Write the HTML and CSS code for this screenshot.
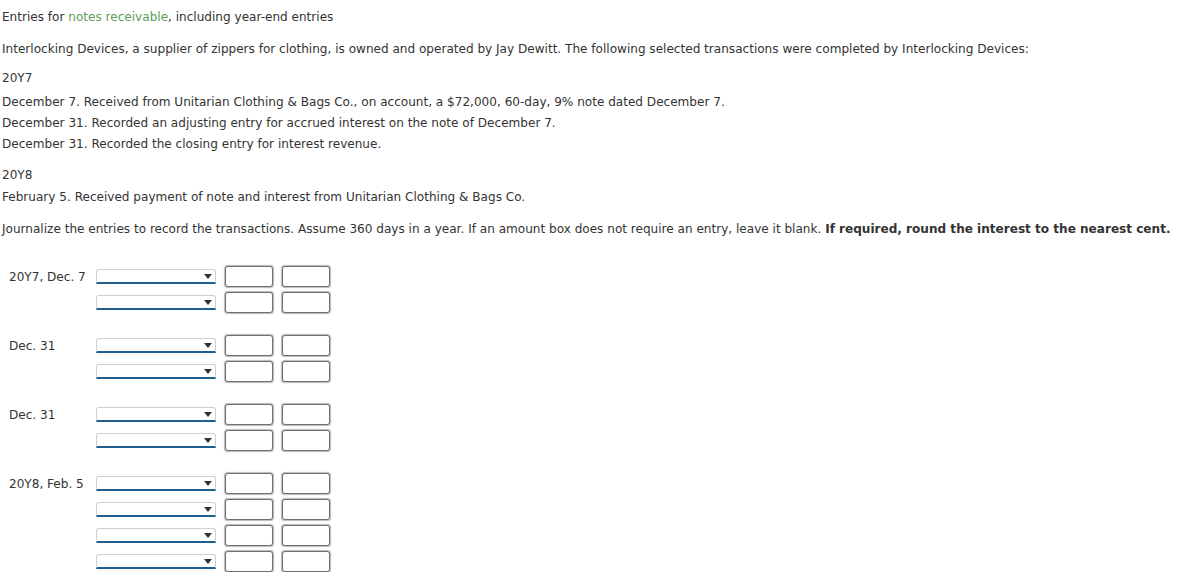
FILE: index.html
```html
<!DOCTYPE html>
<html>
<head>
<meta charset="utf-8">
<link rel="stylesheet" href="styles.css">
</head>
<body>
<div class="page">
  <p class="title">Entries for <span class="term">notes receivable</span>, including year-end entries</p>
  <p class="intro">Interlocking Devices, a supplier of zippers for clothing, is owned and operated by Jay Dewitt. The following selected transactions were completed by Interlocking Devices:</p>
  <p class="year">20Y7</p>
  <p class="tx">December 7. Received from Unitarian Clothing &amp; Bags Co., on account, a $72,000, 60-day, 9% note dated December 7.</p>
  <p class="tx">December 31. Recorded an adjusting entry for accrued interest on the note of December 7.</p>
  <p class="tx">December 31. Recorded the closing entry for interest revenue.</p>
  <p class="year year2">20Y8</p>
  <p class="tx">February 5. Received payment of note and interest from Unitarian Clothing &amp; Bags Co.</p>
  <p class="instr">Journalize the entries to record the transactions. Assume 360 days in a year. If an amount box does not require an entry, leave it blank. <b>If required, round the interest to the nearest cent.</b></p>

  <div class="journal">
    <div class="group">
      <div class="row"><div class="label">20Y7, Dec. 7</div><div class="sel"><span class="arrow"></span></div><div class="box"></div><div class="box"></div></div>
      <div class="row"><div class="label"></div><div class="sel"><span class="arrow"></span></div><div class="box"></div><div class="box"></div></div>
    </div>
    <div class="group">
      <div class="row"><div class="label">Dec. 31</div><div class="sel"><span class="arrow"></span></div><div class="box"></div><div class="box"></div></div>
      <div class="row"><div class="label"></div><div class="sel"><span class="arrow"></span></div><div class="box"></div><div class="box"></div></div>
    </div>
    <div class="group">
      <div class="row"><div class="label">Dec. 31</div><div class="sel"><span class="arrow"></span></div><div class="box"></div><div class="box"></div></div>
      <div class="row"><div class="label"></div><div class="sel"><span class="arrow"></span></div><div class="box"></div><div class="box"></div></div>
    </div>
    <div class="group">
      <div class="row"><div class="label">20Y8, Feb. 5</div><div class="sel"><span class="arrow"></span></div><div class="box"></div><div class="box"></div></div>
      <div class="row"><div class="label"></div><div class="sel"><span class="arrow"></span></div><div class="box"></div><div class="box"></div></div>
      <div class="row"><div class="label"></div><div class="sel"><span class="arrow"></span></div><div class="box"></div><div class="box"></div></div>
      <div class="row"><div class="label"></div><div class="sel"><span class="arrow"></span></div><div class="box"></div><div class="box"></div></div>
    </div>
  </div>
</div>
</body>
</html>
```

FILE: styles.css
```css
html, body {
  margin: 0;
  padding: 0;
  background: #ffffff;
}
body {
  font-family: "DejaVu Sans", Verdana, sans-serif;
  font-size: 12.07px;
  color: #333333;
}
.page {
  padding: 7px 0 0 2px;
}
p {
  margin: 0;
  line-height: 21px;
  white-space: nowrap;
}
.title {
  margin-bottom: 11px;
}
.term {
  color: #5d9e55;
}
.intro {
  margin-bottom: 8px;
}
.year {
  margin-bottom: 3px;
}
.year2 {
  margin-top: 10px;
  margin-bottom: 1px;
}
.instr {
  margin-top: 11px;
}
.instr b {
  font-weight: bold;
}
.journal {
  margin-top: 26px;
  display: flex;
  flex-direction: column;
  gap: 22px;
}
.group {
  display: flex;
  flex-direction: column;
  gap: 5px;
}
.row {
  display: flex;
  align-items: center;
  height: 21px;
}
.label {
  width: 94px;
  padding-left: 7px;
  box-sizing: border-box;
  white-space: nowrap;
}
.sel {
  position: relative;
  width: 120px;
  height: 15px;
  box-sizing: border-box;
  border: 1px solid #d0d0d0;
  border-bottom: 2px solid #1f5f8f;
  border-radius: 3px 3px 0 0;
  background: #ffffff;
}
.arrow {
  position: absolute;
  right: 3px;
  top: 4px;
  width: 0;
  height: 0;
  border-left: 4px solid transparent;
  border-right: 4px solid transparent;
  border-top: 5px solid #333333;
}
.box {
  width: 48px;
  height: 21px;
  box-sizing: border-box;
  margin-left: 9px;
  border: 1px solid #707070;
  border-radius: 3px;
  box-shadow: 0 0 1px 0.5px #b8b8b8;
  background: #ffffff;
}
```
